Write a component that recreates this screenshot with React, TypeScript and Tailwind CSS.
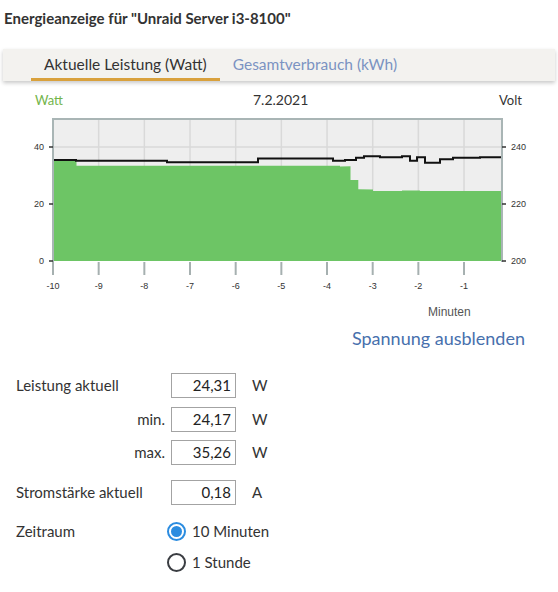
import React from 'react'

const xAt = (m: number) => 53 + (m + 10) * 45.67

const area = [
  [53, 261], [53, 160], [76.5, 160], [76.5, 165.7], [340, 165.7], [340, 166.5], [350.5, 166.3],
  [350.5, 180], [358.3, 180], [358.3, 189.3], [373, 189.5], [373, 191], [402, 191], [402, 190.4],
  [420, 190.4], [420, 191], [502, 191], [502, 261],
]

const volt = [
  [53, 160], [76, 160], [76, 160.7], [167, 160.7], [167, 162.3], [258, 162.3], [258, 158.5],
  [333, 158.5], [333, 160.7], [345, 160.7], [345, 160], [356, 160], [356, 157.8], [364, 157.8],
  [364, 156.2], [380, 156.2], [380, 157.3], [402, 157.3], [402, 156.3], [410, 156.3], [410, 160.7],
  [417, 160.7], [417, 157.3], [425, 157.3], [425, 162.7], [440, 162.7], [440, 159.3], [453, 159.3],
  [453, 157.8], [480, 157.8], [480, 157.3], [502, 157.3],
]

const pts = (p: number[][]) => p.map(([x, y]) => `${x},${y}`).join(' ')

function Chart() {
  const minutes = [-10, -9, -8, -7, -6, -5, -4, -3, -2, -1]
  return (
    <svg width={558} height={185} viewBox="0 110 558 185" className="block">
      <rect x={53} y={119} width={449} height={142} fill="#eeeeee" />
      {minutes.slice(1).map((m) => (
        <line key={m} x1={xAt(m)} x2={xAt(m)} y1={119} y2={261} stroke="#d9d9d9" strokeWidth={1.5} />
      ))}
      <line x1={53} x2={502} y1={147} y2={147} stroke="#d9d9d9" strokeWidth={1.5} />
      <line x1={53} x2={502} y1={204} y2={204} stroke="#d9d9d9" strokeWidth={1.5} />
      <polygon points={pts(area)} fill="#6dc565" />
      <polyline points={pts(volt)} fill="none" stroke="#111" strokeWidth={2} />
      <line x1={53} x2={502} y1={119} y2={119} stroke="#a9b5b5" strokeWidth={2} />
      <line x1={53} x2={53} y1={118} y2={262} stroke="#a9b5b5" strokeWidth={2} />
      <line x1={502} x2={502} y1={118} y2={262} stroke="#a9b5b5" strokeWidth={2} />
      {minutes.map((m) => (
        <g key={m}>
          <line x1={xAt(m)} x2={xAt(m)} y1={262} y2={275} stroke="#a6b0b0" strokeWidth={2} />
          <text x={xAt(m)} y={289} textAnchor="middle" fontSize={9} fill="#333" fontFamily="'Liberation Sans', Arial, sans-serif">
            {m}
          </text>
        </g>
      ))}
      {[
        [147, '40', '240'],
        [204, '20', '220'],
        [261, '0', '200'],
      ].map(([y, l, r]) => (
        <g key={l as string}>
          <line x1={49} x2={53} y1={y as number} y2={y as number} stroke="#333" strokeWidth={1.5} />
          <line x1={502} x2={506} y1={y as number} y2={y as number} stroke="#333" strokeWidth={1.5} />
          <text x={44} y={(y as number) + 3} textAnchor="end" fontSize={9} fill="#333" fontFamily="'Liberation Sans', Arial, sans-serif">
            {l}
          </text>
          <text x={511} y={(y as number) + 3} fontSize={9} fill="#333" fontFamily="'Liberation Sans', Arial, sans-serif">
            {r}
          </text>
        </g>
      ))}
    </svg>
  )
}

function Row({ label, value, unit, right }: { label: string; value: string; unit: string; right?: boolean }) {
  return (
    <div className="flex items-center h-[25px]">
      <div className={`w-[149px] ml-4 ${right ? 'text-right' : ''}`}>{label}</div>
      <div className="ml-[6px] w-[65px] h-[25px] border border-[#a3a3a3] text-right pr-[4px] leading-[23px] text-[#222]">
        {value}
      </div>
      <div className="ml-4">{unit}</div>
    </div>
  )
}

function Radio({ checked, label }: { checked?: boolean; label: string }) {
  return (
    <div className="flex items-center h-[22px] ml-[167px]">
      {checked ? (
        <span className="w-[19px] h-[19px] rounded-full border-2 border-[#2b8ce0] flex items-center justify-center">
          <span className="w-[11px] h-[11px] rounded-full bg-[#2b8ce0]" />
        </span>
      ) : (
        <span className="w-[19px] h-[19px] rounded-full border-2 border-[#3a3d42]" />
      )}
      <span className="ml-[6px]">{label}</span>
    </div>
  )
}

export default function App() {
  return (
    <div className="w-[558px] h-[592px] bg-white text-[#333] font-['Lato','Noto_Sans',sans-serif] overflow-hidden">
      <div className="pt-2 px-1 text-[15px] leading-5 font-bold text-[#333]">
        Energieanzeige für "Unraid Server i3-8100"
      </div>

      <div className="mt-[21px] mx-[3px] h-[32px] bg-[#f3f2ef] shadow-[0_2px_4px_rgba(0,0,0,0.22)] flex items-stretch text-[15.5px]">
        <div className="ml-[28px] px-[13px] flex items-center border-b-[3px] border-[#d9a13c] pt-[3px] text-[#333]">
          Aktuelle Leistung (Watt)
        </div>
        <div className="ml-[13px] flex items-center text-[#7b93c2]">Gesamtverbrauch (kWh)</div>
      </div>

      <div className="mt-[9px] h-5 relative text-[13px] leading-5">
        <span className="absolute left-[35px] text-[#74b54b]">Watt</span>
        <span className="absolute left-[253px] text-[14px]">7.2.2021</span>
        <span className="absolute left-[499px]">Volt</span>
      </div>

      <Chart />

      <div className="mt-[9px] h-4 leading-4 text-[12px] text-[#555] pl-[428px] font-['Liberation_Sans',Arial,sans-serif]">
        Minuten
      </div>

      <div className="mt-[7px] h-[22px] leading-[22px] text-[18px] text-[#4770ad] text-right pr-[33px]">
        Spannung ausblenden
      </div>

      <div className="mt-[24px] text-[15px]">
        <Row label="Leistung aktuell" value="24,31" unit="W" />
        <div className="mt-[9px]">
          <Row label="min." value="24,17" unit="W" right />
        </div>
        <div className="mt-[8px]">
          <Row label="max." value="35,26" unit="W" right />
        </div>
        <div className="mt-[15px]">
          <Row label="Stromstärke aktuell" value="0,18" unit="A" />
        </div>
        <div className="mt-[15px] relative">
          <span className="absolute left-4 top-0 leading-[22px]">Zeitraum</span>
          <Radio checked label="10 Minuten" />
        </div>
        <div className="mt-[9px]">
          <Radio label="1 Stunde" />
        </div>
      </div>
    </div>
  )
}
